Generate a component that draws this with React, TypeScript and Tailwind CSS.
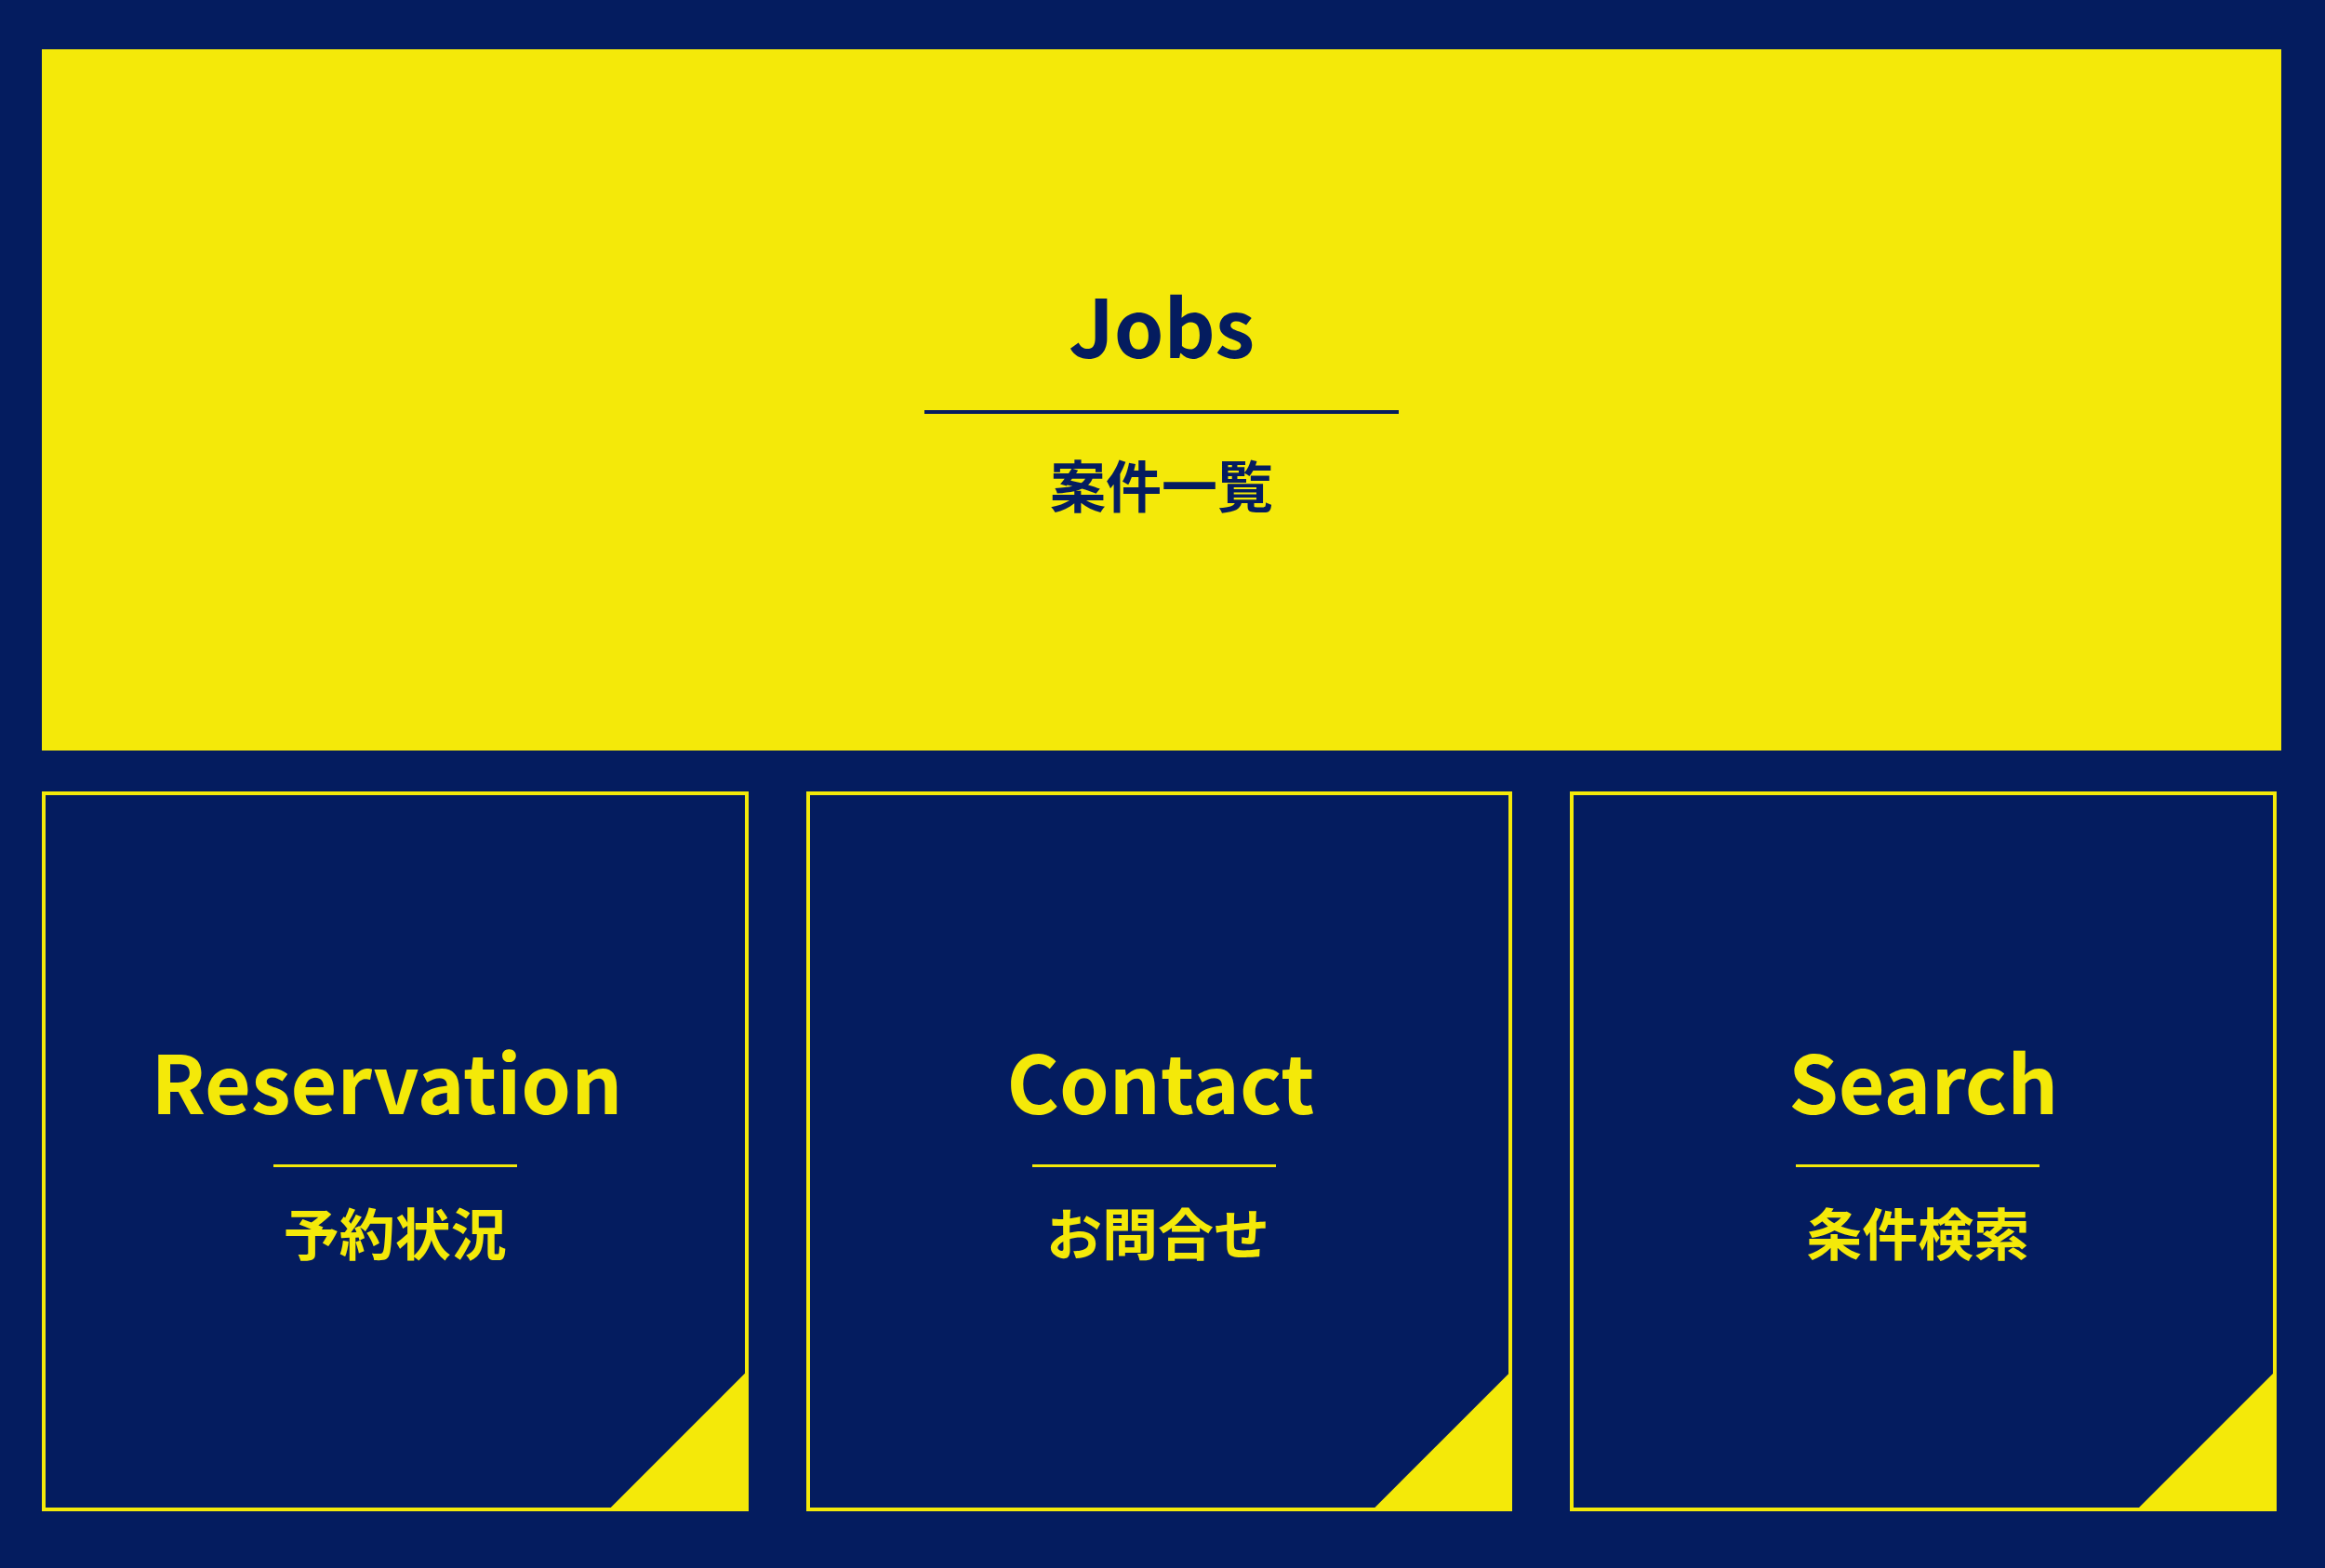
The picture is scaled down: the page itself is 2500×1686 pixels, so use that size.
const font = { fontFamily: '"Noto Sans CJK JP", "Noto Sans", sans-serif' };

interface CardProps {
  title: string;
  sub: string;
  titleClass: string;
  lineClass: string;
  subClass: string;
}

const Card = ({ title, sub, titleClass, lineClass, subClass }: CardProps) => (
  <a
    href="#"
    className="relative flex flex-col items-center justify-center border-4 border-[#f4e909] bg-[#041c5f] pb-[5px] text-[#f4e909]"
  >
    <span className={`text-[86px] font-bold leading-none ${titleClass}`}>{title}</span>
    <span className={`mt-[48px] block h-[3px] w-[262px] bg-[#f4e909] ${lineClass}`} />
    <span className={`mt-[39px] text-[60px] font-bold leading-none ${subClass}`}>{sub}</span>

    {/* corner flap */}
    <span className="absolute -bottom-[4px] -right-[4px] h-[152px] w-[152px] bg-[#f4e909] [clip-path:polygon(100%_0,100%_100%,0_100%)]" />
  </a>
);

export default function App() {
  return (
    <div className="min-h-[1686px] w-full bg-[#041c5f] pl-[45px] pt-[53px]" style={font}>
      <a
        href="#"
        className="flex h-[754px] w-[2408px] flex-col items-center justify-center bg-[#f4e909] pb-[6px] text-[#041c5f]"
      >
        <span className="text-[86px] font-bold leading-none">Jobs</span>
        <span className="mt-[50px] block h-[4px] w-[510px] bg-[#041c5f]" />
        <span className="mt-[45px] text-[60px] font-bold leading-none">案件一覧</span>
      </a>

      <div className="mt-[44px] grid h-[774px] w-[2403px] grid-cols-3 gap-[62px]">
        <Card title="Reservation" sub="予約状況" titleClass="mr-[18px]" lineClass="" subClass="" />
        <Card title="Contact" sub="お問合せ" titleClass="ml-[3px]" lineClass="mr-[11px]" subClass="mr-[3px]" />
        <Card title="Search" sub="条件検索" titleClass="" lineClass="mr-[12px]" subClass="mr-[12px]" />
      </div>
    </div>
  );
}
